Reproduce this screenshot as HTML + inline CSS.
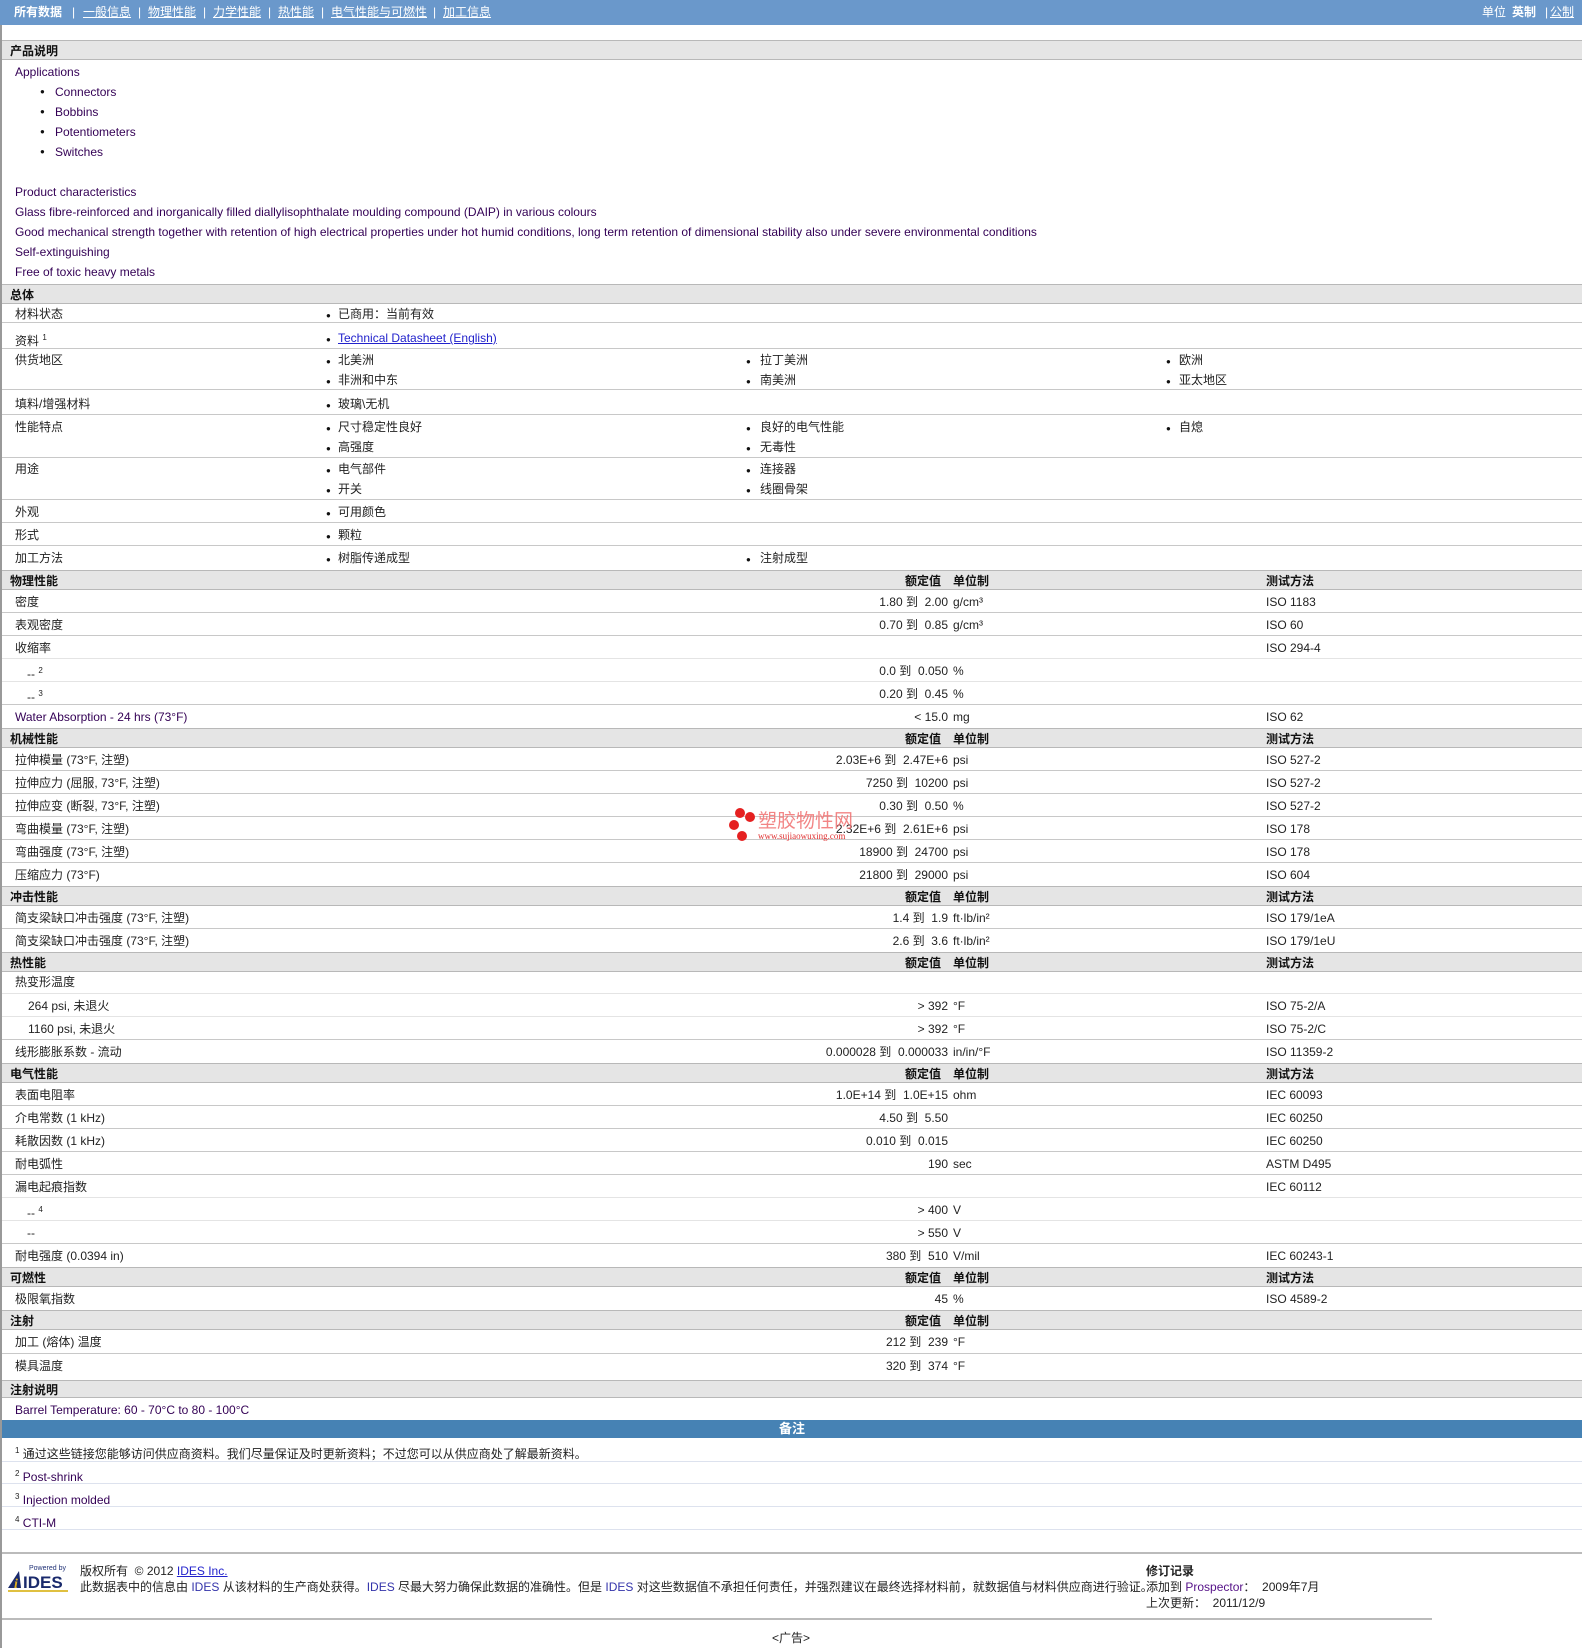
<!DOCTYPE html>
<html><head><meta charset="utf-8">
<style>
*{margin:0;padding:0;box-sizing:border-box}
body{width:1582px;height:1648px;position:relative;background:#fff;font-family:"Liberation Sans","Noto Sans CJK SC",sans-serif;font-size:12px;color:#222;overflow:hidden}
.a{position:absolute;white-space:nowrap;line-height:14px}
.nav{position:absolute;left:0;top:0;width:1582px;height:25px;background:#6a98cb;color:#fff}
.nav span{position:absolute;top:5px;line-height:14px;white-space:nowrap}
.nav u{text-decoration:underline}
.lb{position:absolute;left:0;top:0;width:2px;height:1648px;background:#999}
.h{position:absolute;left:2px;width:1580px;height:20px;background:#e5e5e5;border-top:1px solid #b8b8b8;border-bottom:1px solid #b8b8b8;font-weight:bold;color:#111}
.h span{position:absolute;top:3px;line-height:14px;white-space:nowrap}
.r{position:absolute;left:2px;width:1580px;border-bottom:1px solid #c8c8c8}
.r.lt{border-bottom-color:#e4e4e4}
.r span{position:absolute;line-height:14px;white-space:nowrap;top:5px}
.l{left:13px}
.v{right:634px;text-align:right}
.u{left:951px}
.m{left:1264px}
.c2{left:336px}.c3{left:758px}.c4{left:1177px}
.b2,.b3,.b4,.bu{font-size:8px;color:#111}
.b2{left:324px}.b3{left:744px}.b4{left:1164px}
.en{color:#330055}
sup{font-size:8px;vertical-align:5px}
a{color:#2222cc;text-decoration:underline}
</style></head><body>
<div class="lb"></div>
<div class="nav">
<span style="left:14px;font-weight:bold">所有数据</span>
<span style="left:72px">|</span><span style="left:83px"><u>一般信息</u></span>
<span style="left:138px">|</span><span style="left:148px"><u>物理性能</u></span>
<span style="left:203px">|</span><span style="left:213px"><u>力学性能</u></span>
<span style="left:268px">|</span><span style="left:278px"><u>热性能</u></span>
<span style="left:321px">|</span><span style="left:331px"><u>电气性能与可燃性</u></span>
<span style="left:433px">|</span><span style="left:443px"><u>加工信息</u></span>
<span style="left:1482px">单位</span><span style="left:1512px;font-weight:bold">英制</span><span style="left:1545px">|</span><span style="left:1550px"><u>公制</u></span>
</div>

<div class="h" style="top:40px"><span style="left:8px">产品说明</span></div>
<div class="a en" style="left:15px;top:65px">Applications</div>
<div class="a bu" style="left:40px;top:85px">●</div><div class="a en" style="left:55px;top:85px">Connectors</div>
<div class="a bu" style="left:40px;top:105px">●</div><div class="a en" style="left:55px;top:105px">Bobbins</div>
<div class="a bu" style="left:40px;top:125px">●</div><div class="a en" style="left:55px;top:125px">Potentiometers</div>
<div class="a bu" style="left:40px;top:145px">●</div><div class="a en" style="left:55px;top:145px">Switches</div>
<div class="a en" style="left:15px;top:185px">Product characteristics</div>
<div class="a en" style="left:15px;top:205px">Glass fibre-reinforced and inorganically filled diallylisophthalate moulding compound (DAIP) in various colours</div>
<div class="a en" style="left:15px;top:225px">Good mechanical strength together with retention of high electrical properties under hot humid conditions, long term retention of dimensional stability also under severe environmental conditions</div>
<div class="a en" style="left:15px;top:245px">Self-extinguishing</div>
<div class="a en" style="left:15px;top:265px">Free of toxic heavy metals</div>

<div class="h" style="top:284px"><span style="left:8px">总体</span></div>
<div class="r" style="top:304px;height:19px"><span class="l" style="top:3px">材料状态</span><span class="b2" style="top:5px">●</span><span class="c2" style="top:3px">已商用：当前有效</span></div>
<div class="r" style="top:323px;height:26px"><span class="l" style="top:8px">资料 <sup>1</sup></span><span class="b2" style="top:10px">●</span><span class="c2" style="top:8px"><a>Technical Datasheet (English)</a></span></div>
<div class="r" style="top:349px;height:41px"><span class="l" style="top:4px">供货地区</span>
<span class="b2" style="top:6px">●</span><span class="c2" style="top:4px">北美洲</span><span class="b3" style="top:6px">●</span><span class="c3" style="top:4px">拉丁美洲</span><span class="b4" style="top:6px">●</span><span class="c4" style="top:4px">欧洲</span>
<span class="b2" style="top:26px">●</span><span class="c2" style="top:24px">非洲和中东</span><span class="b3" style="top:26px">●</span><span class="c3" style="top:24px">南美洲</span><span class="b4" style="top:26px">●</span><span class="c4" style="top:24px">亚太地区</span></div>
<div class="r" style="top:390px;height:25px"><span class="l" style="top:7px">填料/增强材料</span><span class="b2" style="top:9px">●</span><span class="c2" style="top:7px">玻璃\无机</span></div>
<div class="r" style="top:415px;height:43px"><span class="l" style="top:5px">性能特点</span>
<span class="b2" style="top:7px">●</span><span class="c2" style="top:5px">尺寸稳定性良好</span><span class="b3" style="top:7px">●</span><span class="c3" style="top:5px">良好的电气性能</span><span class="b4" style="top:7px">●</span><span class="c4" style="top:5px">自熄</span>
<span class="b2" style="top:27px">●</span><span class="c2" style="top:25px">高强度</span><span class="b3" style="top:27px">●</span><span class="c3" style="top:25px">无毒性</span></div>
<div class="r" style="top:458px;height:42px"><span class="l" style="top:4px">用途</span>
<span class="b2" style="top:6px">●</span><span class="c2" style="top:4px">电气部件</span><span class="b3" style="top:6px">●</span><span class="c3" style="top:4px">连接器</span>
<span class="b2" style="top:26px">●</span><span class="c2" style="top:24px">开关</span><span class="b3" style="top:26px">●</span><span class="c3" style="top:24px">线圈骨架</span></div>
<div class="r" style="top:500px;height:23px"><span class="l">外观</span><span class="b2" style="top:7px">●</span><span class="c2">可用颜色</span></div>
<div class="r" style="top:523px;height:23px"><span class="l">形式</span><span class="b2" style="top:7px">●</span><span class="c2">颗粒</span></div>
<div class="r" style="top:546px;height:24px;border-bottom:none"><span class="l">加工方法</span><span class="b2" style="top:7px">●</span><span class="c2">树脂传递成型</span><span class="b3" style="top:7px">●</span><span class="c3">注射成型</span></div>

<div class="h" style="top:570px"><span style="left:8px">物理性能</span><span style="left:903px">额定值</span><span style="left:951px">单位制</span><span style="left:1264px">测试方法</span></div>
<div class="r" style="top:590px;height:23px"><span class="l">密度</span><span class="v">1.80 到&nbsp; 2.00</span><span class="u">g/cm³</span><span class="m">ISO 1183</span></div>
<div class="r" style="top:613px;height:23px"><span class="l">表观密度</span><span class="v">0.70 到&nbsp; 0.85</span><span class="u">g/cm³</span><span class="m">ISO 60</span></div>
<div class="r lt" style="top:636px;height:23px"><span class="l">收缩率</span><span class="m">ISO 294-4</span></div>
<div class="r lt" style="top:659px;height:23px"><span class="l" style="left:25px">-- <sup>2</sup></span><span class="v">0.0 到&nbsp; 0.050</span><span class="u">%</span></div>
<div class="r" style="top:682px;height:23px"><span class="l" style="left:25px">-- <sup>3</sup></span><span class="v">0.20 到&nbsp; 0.45</span><span class="u">%</span></div>
<div class="r" style="top:705px;height:23px;border-bottom:none"><span class="l en">Water Absorption - 24 hrs (73°F)</span><span class="v">&lt; 15.0</span><span class="u">mg</span><span class="m">ISO 62</span></div>

<div class="h" style="top:728px"><span style="left:8px">机械性能</span><span style="left:903px">额定值</span><span style="left:951px">单位制</span><span style="left:1264px">测试方法</span></div>
<div class="r" style="top:748px;height:23px"><span class="l">拉伸模量 (73°F, 注塑)</span><span class="v">2.03E+6 到&nbsp; 2.47E+6</span><span class="u">psi</span><span class="m">ISO 527-2</span></div>
<div class="r" style="top:771px;height:23px"><span class="l">拉伸应力 (屈服, 73°F, 注塑)</span><span class="v">7250 到&nbsp; 10200</span><span class="u">psi</span><span class="m">ISO 527-2</span></div>
<div class="r" style="top:794px;height:23px"><span class="l">拉伸应变 (断裂, 73°F, 注塑)</span><span class="v">0.30 到&nbsp; 0.50</span><span class="u">%</span><span class="m">ISO 527-2</span></div>
<div class="r" style="top:817px;height:23px"><span class="l">弯曲模量 (73°F, 注塑)</span><span class="v">2.32E+6 到&nbsp; 2.61E+6</span><span class="u">psi</span><span class="m">ISO 178</span></div>
<div class="r" style="top:840px;height:23px"><span class="l">弯曲强度 (73°F, 注塑)</span><span class="v">18900 到&nbsp; 24700</span><span class="u">psi</span><span class="m">ISO 178</span></div>
<div class="r" style="top:863px;height:23px;border-bottom:none"><span class="l">压缩应力 (73°F)</span><span class="v">21800 到&nbsp; 29000</span><span class="u">psi</span><span class="m">ISO 604</span></div>

<div class="h" style="top:886px"><span style="left:8px">冲击性能</span><span style="left:903px">额定值</span><span style="left:951px">单位制</span><span style="left:1264px">测试方法</span></div>
<div class="r" style="top:906px;height:23px"><span class="l">简支梁缺口冲击强度 (73°F, 注塑)</span><span class="v">1.4 到&nbsp; 1.9</span><span class="u">ft·lb/in²</span><span class="m">ISO 179/1eA</span></div>
<div class="r" style="top:929px;height:23px;border-bottom:none"><span class="l">简支梁缺口冲击强度 (73°F, 注塑)</span><span class="v">2.6 到&nbsp; 3.6</span><span class="u">ft·lb/in²</span><span class="m">ISO 179/1eU</span></div>

<div class="h" style="top:952px"><span style="left:8px">热性能</span><span style="left:903px">额定值</span><span style="left:951px">单位制</span><span style="left:1264px">测试方法</span></div>
<div class="r lt" style="top:972px;height:22px"><span class="l" style="top:3px">热变形温度</span></div>
<div class="r lt" style="top:994px;height:23px"><span class="l" style="left:26px">264 psi, 未退火</span><span class="v">&gt; 392</span><span class="u">°F</span><span class="m">ISO 75-2/A</span></div>
<div class="r" style="top:1017px;height:23px"><span class="l" style="left:26px">1160 psi, 未退火</span><span class="v">&gt; 392</span><span class="u">°F</span><span class="m">ISO 75-2/C</span></div>
<div class="r" style="top:1040px;height:23px;border-bottom:none"><span class="l">线形膨胀系数 - 流动</span><span class="v">0.000028 到&nbsp; 0.000033</span><span class="u">in/in/°F</span><span class="m">ISO 11359-2</span></div>

<div class="h" style="top:1063px"><span style="left:8px">电气性能</span><span style="left:903px">额定值</span><span style="left:951px">单位制</span><span style="left:1264px">测试方法</span></div>
<div class="r" style="top:1083px;height:23px"><span class="l">表面电阻率</span><span class="v">1.0E+14 到&nbsp; 1.0E+15</span><span class="u">ohm</span><span class="m">IEC 60093</span></div>
<div class="r" style="top:1106px;height:23px"><span class="l">介电常数 (1 kHz)</span><span class="v">4.50 到&nbsp; 5.50</span><span class="m">IEC 60250</span></div>
<div class="r" style="top:1129px;height:23px"><span class="l">耗散因数 (1 kHz)</span><span class="v">0.010 到&nbsp; 0.015</span><span class="m">IEC 60250</span></div>
<div class="r" style="top:1152px;height:23px"><span class="l">耐电弧性</span><span class="v">190</span><span class="u">sec</span><span class="m">ASTM D495</span></div>
<div class="r lt" style="top:1175px;height:23px"><span class="l">漏电起痕指数</span><span class="m">IEC 60112</span></div>
<div class="r lt" style="top:1198px;height:23px"><span class="l" style="left:25px">-- <sup>4</sup></span><span class="v">&gt; 400</span><span class="u">V</span></div>
<div class="r" style="top:1221px;height:23px"><span class="l" style="left:25px">--</span><span class="v">&gt; 550</span><span class="u">V</span></div>
<div class="r" style="top:1244px;height:23px;border-bottom:none"><span class="l">耐电强度 (0.0394 in)</span><span class="v">380 到&nbsp; 510</span><span class="u">V/mil</span><span class="m">IEC 60243-1</span></div>

<div class="h" style="top:1267px"><span style="left:8px">可燃性</span><span style="left:903px">额定值</span><span style="left:951px">单位制</span><span style="left:1264px">测试方法</span></div>
<div class="r" style="top:1287px;height:23px;border-bottom:none"><span class="l">极限氧指数</span><span class="v">45</span><span class="u">%</span><span class="m">ISO 4589-2</span></div>

<div class="h" style="top:1310px"><span style="left:8px">注射</span><span style="left:903px">额定值</span><span style="left:951px">单位制</span></div>
<div class="r" style="top:1330px;height:24px"><span class="l">加工 (熔体) 温度</span><span class="v">212 到&nbsp; 239</span><span class="u">°F</span></div>
<div class="r" style="top:1354px;height:26px;border-bottom:none"><span class="l">模具温度</span><span class="v">320 到&nbsp; 374</span><span class="u">°F</span></div>

<div class="h" style="top:1380px;height:18px"><span style="left:8px;top:2px">注射说明</span></div>
<div class="a en" style="left:15px;top:1403px">Barrel Temperature: 60 - 70°C to 80 - 100°C</div>

<div style="position:absolute;left:2px;top:1420px;width:1580px;height:18px;background:#4682b4;color:#fff;font-weight:bold;text-align:center;line-height:18px;font-size:13px">备注</div>
<div class="r" style="top:1438px;height:24px;border-bottom-color:#dde2ee"><span class="l" style="top:6px"><sup>1</sup> 通过这些链接您能够访问供应商资料。我们尽量保证及时更新资料；不过您可以从供应商处了解最新资料。</span></div>
<div class="r" style="top:1462px;height:22px;border-bottom-color:#dde2ee"><span class="l" style="top:5px"><sup>2</sup> <span class="en" style="position:static">Post-shrink</span></span></div>
<div class="r" style="top:1484px;height:23px;border-bottom-color:#dde2ee"><span class="l" style="top:6px"><sup>3</sup> <span class="en" style="position:static">Injection molded</span></span></div>
<div class="r" style="top:1507px;height:23px;border-bottom-color:#dde2ee"><span class="l" style="top:6px"><sup>4</sup> <span class="en" style="position:static">CTI-M</span></span></div>

<div style="position:absolute;left:2px;top:1552px;width:1580px;height:2px;background:#bbb"></div>

<svg style="position:absolute;left:7px;top:1563px" width="64" height="30" viewBox="0 0 64 30">
<text x="22" y="7" font-size="7" fill="#223377" font-family="Liberation Sans">Powered by</text>
<polygon points="1,25 12,8 14,25" fill="#1a2a6c"/>
<text x="7" y="25" font-size="14" font-style="italic" font-weight="bold" fill="#e0b020" font-family="Liberation Serif">i</text>
<text x="16" y="25" font-size="17" font-weight="bold" fill="#1a2a6c" font-family="Liberation Sans">IDES</text>
<rect x="1" y="27" width="60" height="2" fill="#e0c040"/>
</svg>
<div class="a" style="left:80px;top:1564px">版权所有 &nbsp;© 2012 <a>IDES Inc.</a></div>
<div class="a" style="left:80px;top:1580px">此数据表中的信息由 <span style="color:#3333aa">IDES</span> 从该材料的生产商处获得。<span style="color:#3333aa">IDES</span> 尽最大努力确保此数据的准确性。但是 <span style="color:#3333aa">IDES</span> 对这些数据值不承担任何责任，并强烈建议在最终选择材料前，就数据值与材料供应商进行验证。</div>
<div class="a" style="left:1146px;top:1564px;font-weight:bold">修订记录</div>
<div class="a" style="left:1146px;top:1580px">添加到 <span class="en" style="color:#551188">Prospector</span>： &nbsp;2009年7月</div>
<div class="a" style="left:1146px;top:1596px">上次更新： &nbsp;2011/12/9</div>
<div style="position:absolute;left:2px;top:1618px;width:1430px;height:2px;background:#bbb"></div>
<div class="a" style="left:772px;top:1631px">&lt;广告&gt;</div>

<svg style="position:absolute;left:728px;top:805px" width="130" height="40">
<circle cx="12" cy="8" r="5" fill="#e52020"/><circle cx="22" cy="12" r="5" fill="#e52020"/><circle cx="6" cy="20" r="5" fill="#e52020"/><circle cx="14" cy="31" r="5" fill="#e52020"/>
<text x="30" y="22" font-size="19" fill="#f07070" font-family="Noto Sans CJK SC,sans-serif" opacity="0.85">塑胶物性网</text>
<text x="30" y="34" font-size="9" fill="#e03030" font-family="Liberation Serif">www.sujiaowuxing.com</text>
</svg>
</body></html>
